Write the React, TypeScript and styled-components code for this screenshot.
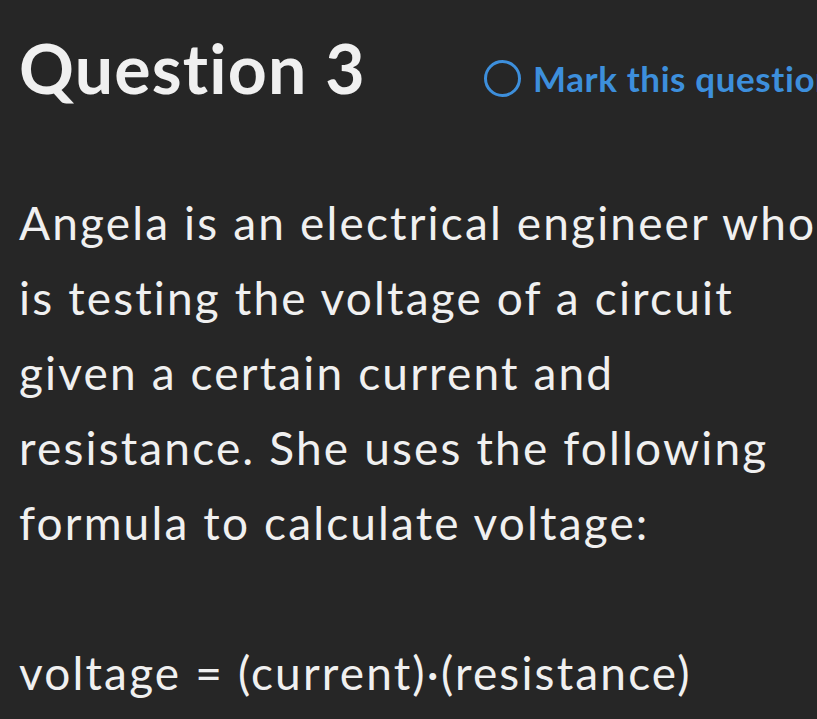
import React from "react";
import styled, { createGlobalStyle } from "styled-components";

const Global = createGlobalStyle`
  html, body { margin: 0; padding: 0; background: #262626; }
  body { overflow: hidden; }
`;

const Page = styled.div`
  width: 817px;
  height: 719px;
  overflow: hidden;
  background: #262626;
  color: #f0f0f0;
  font-family: Lato, "Open Sans", sans-serif;
  font-variant-ligatures: none;
  padding: 34px 0 0 19px;
  box-sizing: border-box;
`;

const Header = styled.div`
  display: flex;
  align-items: flex-start;
  margin-bottom: 83px;
  white-space: nowrap;
`;

const Title = styled.h1`
  margin: 0;
  font-size: 68px;
  font-weight: 700;
  letter-spacing: 1.2px;
  color: #f0f0f0;
  line-height: 68px;
`;

const MarkButton = styled.button`
  display: flex;
  align-items: center;
  gap: 12px;
  margin: 23px 0 0 118px;
  background: none;
  border: none;
  padding: 0;
  color: #3d8fdc;
  font-family: inherit;
  font-variant-ligatures: none;
  font-size: 35px;
  line-height: 42px;
  font-weight: 700;
  letter-spacing: 0.6px;
  cursor: pointer;
  white-space: nowrap;
`;

const Circle = styled.span`
  width: 31px;
  height: 31px;
  border: 3px solid #3d8fdc;
  border-radius: 50%;
  flex: none;
`;

const Body = styled.div`
  font-size: 46px;
  line-height: 75px;
  letter-spacing: 2.15px;
  white-space: nowrap;
`;

const Para = styled.p`
  margin: 0 0 75px 0;
`;

export default function App() {
  return (
    <>
      <Global />
      <Page>
        <Header>
          <Title>Question 3</Title>
          <MarkButton>
            <Circle />
            Mark this question
          </MarkButton>
        </Header>
        <Body>
          <Para>
            Angela is an electrical engineer who
            <br />
            is testing the voltage of a circuit
            <br />
            given a certain current and
            <br />
            resistance. She uses the following
            <br />
            formula to calculate voltage:
          </Para>
          <Para>voltage = (current)·(resistance)</Para>
        </Body>
      </Page>
    </>
  );
}
